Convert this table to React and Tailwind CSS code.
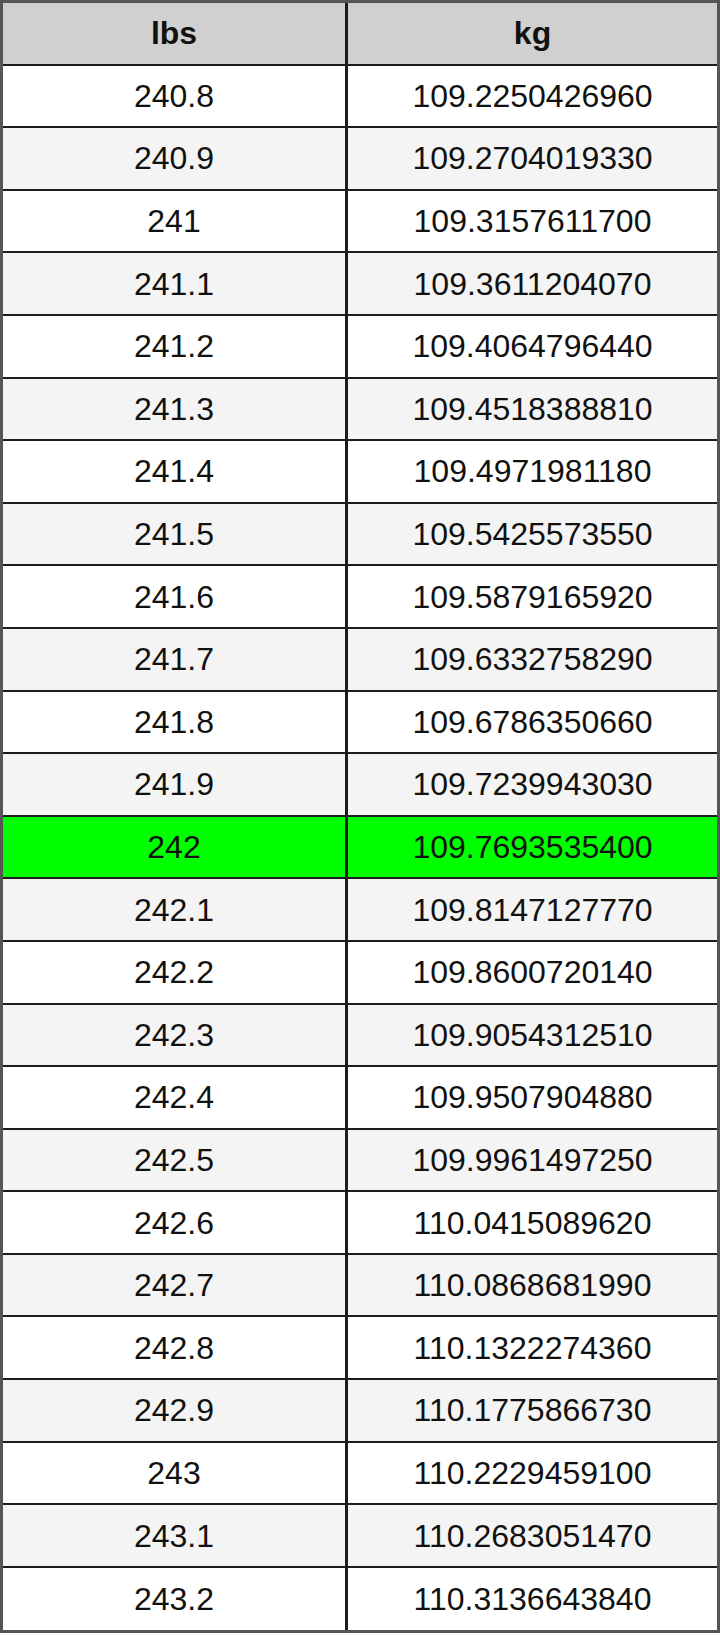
const rows = [
  ["240.8", "109.2250426960"],
  ["240.9", "109.2704019330"],
  ["241", "109.3157611700"],
  ["241.1", "109.3611204070"],
  ["241.2", "109.4064796440"],
  ["241.3", "109.4518388810"],
  ["241.4", "109.4971981180"],
  ["241.5", "109.5425573550"],
  ["241.6", "109.5879165920"],
  ["241.7", "109.6332758290"],
  ["241.8", "109.6786350660"],
  ["241.9", "109.7239943030"],
  ["242", "109.7693535400"],
  ["242.1", "109.8147127770"],
  ["242.2", "109.8600720140"],
  ["242.3", "109.9054312510"],
  ["242.4", "109.9507904880"],
  ["242.5", "109.9961497250"],
  ["242.6", "110.0415089620"],
  ["242.7", "110.0868681990"],
  ["242.8", "110.1322274360"],
  ["242.9", "110.1775866730"],
  ["243", "110.2229459100"],
  ["243.1", "110.2683051470"],
  ["243.2", "110.3136643840"],
];

function Row({ lbs, kg, bg, last, bold }) {
  return (
    <div className={`flex h-[62.6px] ${bg} ${last ? "" : "border-b-[2.5px] border-[#1c1c1c]"}`}>
      <div className={`w-[345px] shrink-0 flex items-center justify-center border-r-[3px] border-[#1c1c1c] ${bold ? "font-bold" : ""}`}>
        {lbs}
      </div>
      <div className={`flex-1 flex items-center justify-center ${bold ? "font-bold" : ""}`}>
        {kg}
      </div>
    </div>
  );
}

export default function App() {
  return (
    <div className="w-[720px] bg-white">
      <div
        className="border-[3px] border-[#555555] text-[32px] text-[#111111] leading-none"
        style={{ fontFamily: '"Liberation Sans", Arial, sans-serif' }}
      >
        <Row lbs="lbs" kg="kg" bg="bg-[#d0d0d0]" bold />
        {rows.map(([lbs, kg], i) => {
          const bg = lbs === "242" ? "bg-[#00ff00]" : i % 2 === 0 ? "bg-white" : "bg-[#f4f4f4]";
          return <Row key={lbs} lbs={lbs} kg={kg} bg={bg} last={i === rows.length - 1} />;
        })}
      </div>
    </div>
  );
}
